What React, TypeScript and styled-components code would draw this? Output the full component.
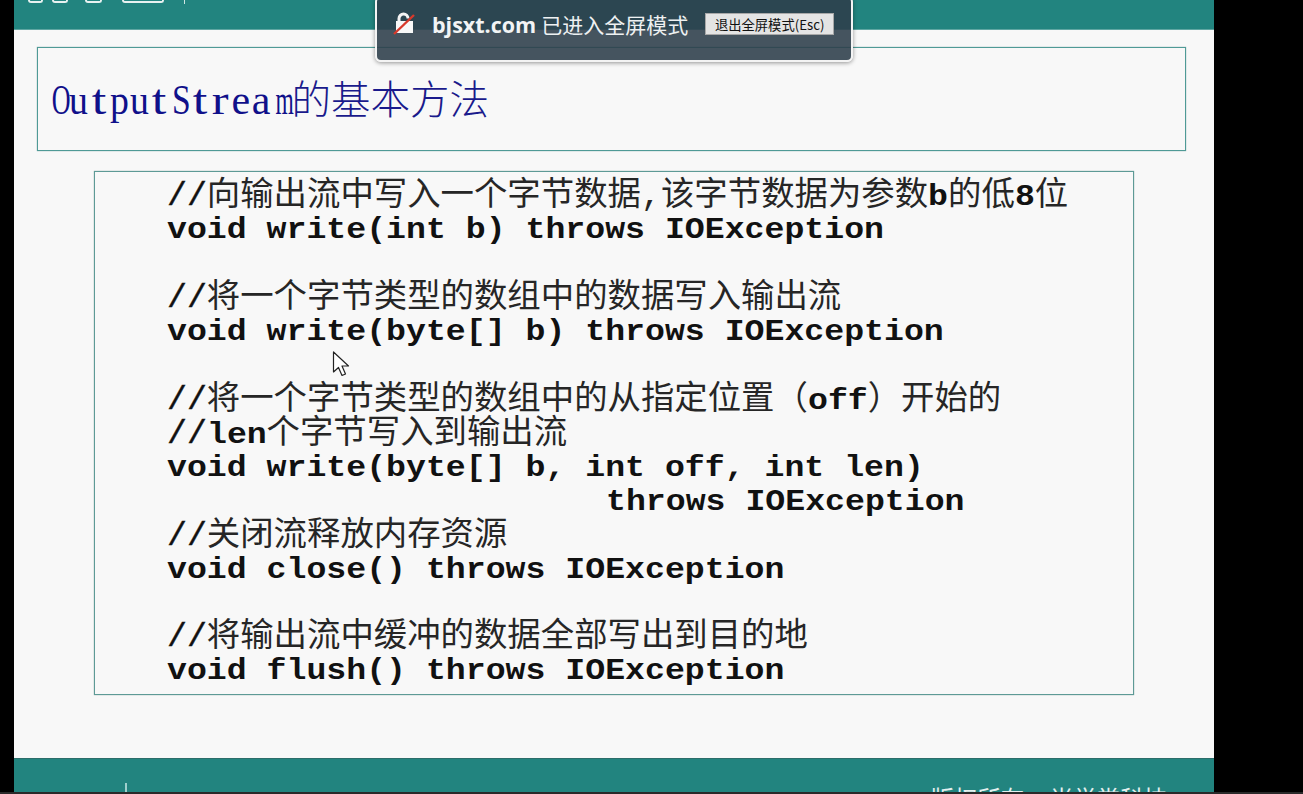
import React from "react";
import styled, { createGlobalStyle } from "styled-components";

const GlobalStyle = createGlobalStyle`
  html, body {
    margin: 0;
    padding: 0;
    background: #000;
    overflow: hidden;
  }
`;

const MONO_ADVANCE = 19.92;

const Screen = styled.div`
  position: relative;
  width: 1303px;
  height: 794px;
  background: #000;
  overflow: hidden;
`;

const Slide = styled.div`
  width: 1200px;
  height: 792px;
  margin-left: 14px;
  background: #f8f8f8;
  display: flex;
  flex-direction: column;
`;

const TopBar = styled.div`
  height: 29px;
  flex: none;
  background: #22847f;
  border-bottom: 1px solid #5fa6a2;
  display: flex;
  align-items: flex-start;
  padding-left: 14px;
`;

const ClippedTab = styled.div<{ $w: number; $gap: number }>`
  width: ${(p) => p.$w}px;
  height: 1px;
  margin-left: ${(p) => p.$gap}px;
  border: 2px solid #e8f2f1;
  border-top: none;
  border-radius: 0 0 4px 4px;
`;

const TickTop = styled.div`
  width: 1px;
  height: 4px;
  background: #cfe6e4;
  margin-left: 20px;
`;

const Body = styled.div`
  flex: 1;
  display: flex;
  flex-direction: column;
  padding: 17px 28px 0 23px;
`;

const TitleBox = styled.div`
  height: 102px;
  border: 1px solid #4f9a96;
  box-shadow: 0 0 1px rgba(60, 130, 125, 0.7);
  display: flex;
  align-items: center;
  padding-left: 10px;
  flex: none;
`;

const Title = styled.h1`
  margin: 0;
  font-weight: normal;
  color: #10108a;
  line-height: 1;
  white-space: nowrap;
  display: flex;
  align-items: baseline;
`;

const TitleCell = styled.span<{ $scale: number }>`
  display: inline-block;
  width: 20.3px;
  text-align: center;
  font-family: "Liberation Serif", serif;
  font-size: 42px;
  transform: scaleX(${(p) => p.$scale});
`;

const TitleCjk = styled.span`
  font-family: "Noto Sans CJK SC", sans-serif;
  font-size: 39.5px;
  font-weight: 300;
  color: #1a1a8c;
`;

const CodeBox = styled.div`
  flex: none;
  margin: 20px 0 0 57px;
  border: 1px solid #5d9a96;
  box-shadow: 0 0 1px rgba(70, 120, 116, 0.7);
  padding: 7px 0 0 72px;
  width: 966px;
  height: 515px;
`;

const Line = styled.div`
  height: 34px;
  line-height: 34px;
  white-space: pre;
  font-family: "Liberation Mono", monospace;
  color: #111;
`;

const Signature = styled(Line)<{ $indent?: number }>`
  font-weight: bold;
  font-size: 29.5px;
  margin-left: ${(p) => p.$indent ?? 0}px;
  transform: scaleX(1.125);
  transform-origin: left center;
`;

const Comment = styled(Line)`
  font-family: "Liberation Mono", "Noto Sans CJK SC", monospace;
  font-size: 33.4px;
  color: #262626;
`;

const Slash = styled.span`
  font-size: 33.2px;
  color: #111;
  -webkit-text-stroke: 0.5px #111;
`;

const Kw = styled.b<{ $n: number }>`
  display: inline-block;
  width: ${(p) => p.$n * MONO_ADVANCE}px;
  font-size: 29.5px;
  color: #111;
  transform: scaleX(1.125);
  transform-origin: left center;
`;

const LastBlock = styled.div`
  margin-top: -1px;
`;

const Footer = styled.div`
  height: 33px;
  flex: none;
  background: #22847f;
  border-top: 1px solid #2c6d6a;
  overflow: hidden;
  display: flex;
  align-items: flex-start;
  justify-content: space-between;
  padding-left: 111px;
  padding-right: 47px;
`;

const FooterTick = styled.div`
  width: 2px;
  height: 9px;
  background: #9fd0cd;
  margin-top: 24px;
`;

const FooterText = styled.div`
  margin-top: 24px;
  font-family: "Noto Sans CJK SC", sans-serif;
  font-size: 23.4px;
  line-height: 30px;
  color: #e4f0ef;
  white-space: nowrap;
  display: flex;
  gap: 26px;
`;

const BottomStrip = styled.div`
  height: 2px;
  background: #2a2a2a;
`;

const Bubble = styled.div`
  position: absolute;
  left: 375px;
  top: -4px;
  width: 459px;
  height: 52px;
  padding: 0 0 10px 15px;
  background: rgba(46, 63, 75, 0.89);
  border: 2px solid #f4f4f4;
  border-radius: 6px;
  box-shadow: 0 1px 4px rgba(0, 0, 0, 0.4);
  display: flex;
  align-items: center;
`;

const Domain = styled.span`
  font-family: "Open Sans", "Noto Sans", sans-serif;
  font-weight: 700;
  font-size: 21.5px;
  color: #f2f4f5;
  margin-left: 16px;
`;

const Notice = styled.span`
  font-family: "Noto Sans CJK SC", sans-serif;
  font-size: 21px;
  color: #eef1f2;
  margin-left: 5px;
`;

const ExitButton = styled.div`
  margin-left: 17px;
  width: 129px;
  height: 22px;
  background: #e4e4e4;
  border: 1px solid #a8a8a8;
  box-sizing: border-box;
  display: flex;
  align-items: center;
  justify-content: center;
  font-family: "Noto Sans CJK SC", "Noto Sans", sans-serif;
  font-size: 13.3px;
  color: #111;
  white-space: nowrap;
`;

const CursorMark = styled.svg`
  position: absolute;
  left: 332px;
  top: 351px;
`;

const glyphScale: Record<string, number> = {
  O: 0.62,
  u: 0.9,
  t: 1.25,
  p: 0.9,
  S: 0.8,
  r: 1.2,
  m: 0.56,
};

function LockIcon() {
  return (
    <svg width="24" height="24" viewBox="0 0 24 24">
      <path d="M7 9V6.5a4.5 4.5 0 0 1 9 0" fill="none" stroke="#f4f4f4" strokeWidth="3" />
      <path d="M4 9h17v12H4z" fill="#f8f8f8" />
      <path d="M2 22L22 3" stroke="#d8392b" strokeWidth="2.4" />
    </svg>
  );
}

export default function App() {
  return (
    <Screen>
      <GlobalStyle />
      <Slide>
        <TopBar>
          <ClippedTab $w={11} $gap={0} />
          <ClippedTab $w={12} $gap={9} />
          <ClippedTab $w={13} $gap={17} />
          <ClippedTab $w={38} $gap={20} />
          <TickTop />
        </TopBar>
        <Body>
          <TitleBox>
            <Title>
              {"OutputStream".split("").map((c, i) => (
                <TitleCell key={i} $scale={glyphScale[c] ?? 1}>
                  {c}
                </TitleCell>
              ))}
              <TitleCjk>的基本方法</TitleCjk>
            </Title>
          </TitleBox>
          <CodeBox>
            <Comment>
              <Slash>//</Slash>向输出流中写入一个字节数据,该字节数据为参数<Kw $n={1}>b</Kw>的低<Kw $n={1}>8</Kw>位
            </Comment>
            <Signature>void write(int b) throws IOException</Signature>
            <Line> </Line>
            <Comment>
              <Slash>//</Slash>将一个字节类型的数组中的数据写入输出流
            </Comment>
            <Signature>void write(byte[] b) throws IOException</Signature>
            <Line> </Line>
            <Comment>
              <Slash>//</Slash>将一个字节类型的数组中的从指定位置（<Kw $n={3}>off</Kw>）开始的
            </Comment>
            <Comment>
              <Slash>//</Slash>
              <Kw $n={3}>len</Kw>个字节写入到输出流
            </Comment>
            <Signature>void write(byte[] b, int off, int len)</Signature>
            <Signature $indent={439}>throws IOException</Signature>
            <Comment>
              <Slash>//</Slash>关闭流释放内存资源
            </Comment>
            <Signature>void close() throws IOException</Signature>
            <Line> </Line>
            <LastBlock>
              <Comment>
                <Slash>//</Slash>将输出流中缓冲的数据全部写出到目的地
              </Comment>
              <Signature>void flush() throws IOException</Signature>
            </LastBlock>
          </CodeBox>
        </Body>
        <Footer>
          <FooterTick />
          <FooterText>
            <span>版权所有</span>
            <span>尚学堂科技</span>
          </FooterText>
        </Footer>
      </Slide>
      <BottomStrip />
      <CursorMark width="18" height="28" viewBox="0 0 18 28">
        <path d="M1.5 1v20l5-4.5 3.5 8 3.5-1.5-3.5-8h6.5z" fill="#fff" stroke="#222" strokeWidth="1.2" strokeLinejoin="round" />
      </CursorMark>
      <Bubble>
        <LockIcon />
        <Domain>bjsxt.com</Domain>
        <Notice>已进入全屏模式</Notice>
        <ExitButton>退出全屏模式(Esc)</ExitButton>
      </Bubble>
    </Screen>
  );
}
